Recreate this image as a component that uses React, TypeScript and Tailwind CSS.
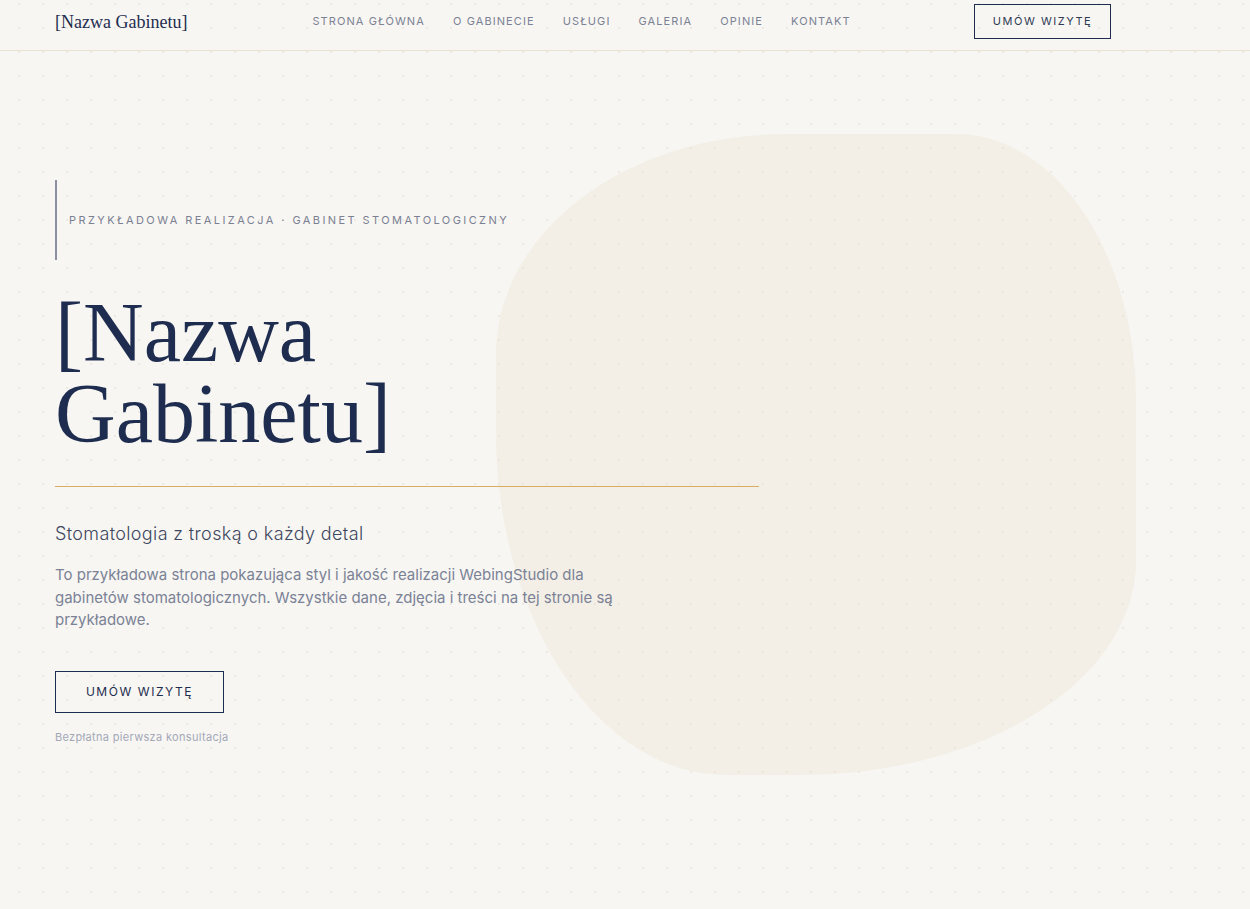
const navItems = ['STRONA GŁÓWNA', 'O GABINECIE', 'USŁUGI', 'GALERIA', 'OPINIE', 'KONTAKT'];

const serif = "font-['Liberation_Serif','DejaVu_Serif',serif]";

function Header() {
  return (
    <header className="relative z-10 h-[51px] border-b border-[#e9e1d3]">
      <div className="h-[43px] flex items-center pl-[55px] pr-[139px]">
        <a className={`${serif} text-[18px] text-[#1e2d4f] leading-none`}>[Nazwa Gabinetu]</a>
        <nav className="ml-[125px] flex items-center gap-[28px]">
          {navItems.map((item) => (
            <a key={item} className="text-[11px] tracking-[0.1em] text-[#7c8295]">
              {item}
            </a>
          ))}
        </nav>
        <button className="ml-auto h-[35px] w-[137px] border border-[#1e2d4f] text-[11px] tracking-[0.14em] text-[#2f3a55]">
          UMÓW WIZYTĘ
        </button>
      </div>
    </header>
  );
}

export default function App() {
  return (
    <div className="relative min-h-screen overflow-hidden bg-[#f7f6f2] bg-[radial-gradient(circle,#ece9e3_1px,transparent_1.3px)] bg-[size:24px_24px] bg-[position:7px_-8px] font-['Inter','Noto_Sans',sans-serif]">
      {/* decorative blob */}
      <div className="pointer-events-none absolute left-[496px] top-[134px] h-[641px] w-[640px] bg-[rgba(232,218,196,0.25)] rounded-[290px_180px_336px_230px/220px_266px_214px_344px]" />

      <Header />

      <main className="relative pl-[55px] pt-[129px] pb-[160px]">
        <div className="h-[80px] border-l-2 border-[#8a90a0] pl-[12px] flex items-center">
          <p className="text-[11px] tracking-[0.22em] text-[#7b8193]">
            PRZYKŁADOWA REALIZACJA · GABINET STOMATOLOGICZNY
          </p>
        </div>

        <h1 className={`${serif} mt-[32px] text-[84px] leading-[81px] text-[#1e2d4f]`}>
          [Nazwa
          <br />
          Gabinetu]
        </h1>

        <div className="mt-[32px] h-px w-[704px] bg-[#d8ad63]" />

        <h2 className="mt-[34px] text-[18px] font-light leading-[26px] tracking-[0.02em] text-[#3e4760]">
          Stomatologia z troską o każdy detal
        </h2>

        <p className="mt-[17px] w-[560px] text-[15px] leading-[22.5px] text-[#7b8296]">
          To przykładowa strona pokazująca styl i jakość realizacji WebingStudio dla gabinetów
          stomatologicznych. Wszystkie dane, zdjęcia i treści na tej stronie są przykładowe.
        </p>

        <button className="mt-[39px] h-[42px] w-[169px] border border-[#1e2d4f] text-[12px] tracking-[0.13em] text-[#1e2d4f]">
          UMÓW WIZYTĘ
        </button>

        <p className="mt-[16px] text-[11px] tracking-[0.03em] text-[#a3a8b8]">Bezpłatna pierwsza konsultacja</p>
      </main>
    </div>
  );
}
